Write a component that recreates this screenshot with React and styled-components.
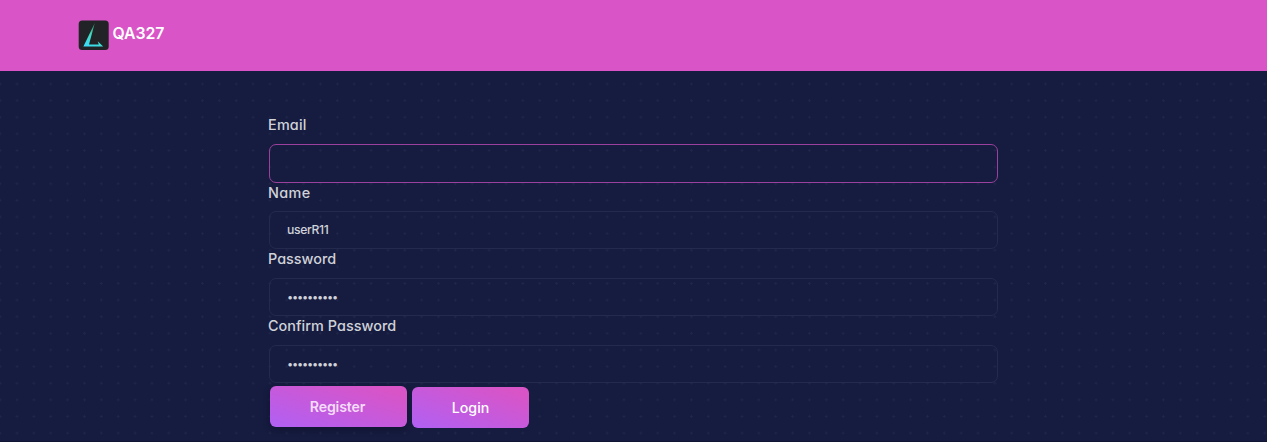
import React from "react";
import styled, { createGlobalStyle } from "styled-components";

const Global = createGlobalStyle`
  * { box-sizing: border-box; }
  body {
    margin: 0;
    background: #161c3f;
    color: #d0d2d9;
    font-family: Inter, "Open Sans", sans-serif;
    font-feature-settings: "cv11";
  }
`;

const Page = styled.div`
  height: 442px;
  overflow: hidden;
  border-bottom: 1px solid #111534;
  background-color: #161c3f;
  background-image: radial-gradient(circle at 8.4px 8.3px, #202649 0.9px, transparent 1.4px);
  background-size: 16.87px 16.64px;
  background-position: -8.2px 75.7px;
`;

const Navbar = styled.header`
  display: flex;
  align-items: flex-start;
  gap: 3.5px;
  height: 71px;
  padding: 20px 78px;
  background: #d954c6;
`;

const Brand = styled.span`
  margin-top: 3px;
  color: #fff;
  font-size: 15.8px;
  font-weight: 600;
  line-height: 21px;
  letter-spacing: -0.05px;
`;

const Form = styled.form`
  width: 730px;
  margin: 44px 0 0 268px;
`;

const Field = styled.div`
  display: flex;
  flex-direction: column;
  height: ${(p) => p.$height}px;
`;

const Label = styled.label`
  height: ${(p) => p.$height}px;
  font-size: 14.4px;
  font-weight: 450;
  line-height: 20px;
  letter-spacing: ${(p) => p.$spacing}px;
`;

const Input = styled.input`
  width: 729px;
  margin-left: 1px;
  height: ${(p) => (p.$active ? 39 : 38)}px;
  padding: ${(p) => (p.type === "password" ? "0 17px" : "0 17px 2px")};
  border: 1px solid ${(p) => (p.$active ? "#9b409d" : "#232a4d")};
  border-radius: 7px;
  outline: none;
  background: transparent;
  color: #d0d2d9;
  font: ${(p) => (p.type === "password" ? "11px" : "450 12.2px")} Inter, sans-serif;
  font-feature-settings: "cv11";
  letter-spacing: ${(p) => (p.type === "password" ? -1.2 : -0.35)}px;
`;

const Actions = styled.div`
  display: flex;
  align-items: flex-start;
  gap: 5.5px;
  margin: 2px 0 0 1.5px;
`;

const Button = styled.button`
  width: ${(p) => p.$width}px;
  height: 41px;
  margin-top: ${(p) => (p.$raised ? 0 : 1)}px;
  padding: ${(p) => (p.$raised ? "0 1px 1px 0" : "0 0 1px")};
  border: 0;
  border-radius: 6px;
  background: linear-gradient(to top right, #b060f4, #d954c6 90%);
  box-shadow: ${(p) => (p.$raised ? "0 3px 6px rgba(8, 10, 35, 0.4)" : "none")};
  color: ${(p) => (p.$raised ? "#f4dcf8" : "#fff")};
  font: ${(p) => (p.$raised ? 600 : 500)} 14.2px Inter, sans-serif;
  font-feature-settings: "cv11";
  letter-spacing: ${(p) => (p.$raised ? -0.15 : 0)}px;
`;

function Logo() {
  return (
    <svg width="31" height="30" viewBox="0 0 31 30">
      <defs>
        <linearGradient id="mark" x1="0.2" y1="1" x2="0.6" y2="0">
          <stop offset="0" stopColor="#3cdcf8" />
          <stop offset="0.5" stopColor="#42dcc0" />
          <stop offset="1" stopColor="#2f8458" />
        </linearGradient>
      </defs>
      <rect x="0.7" y="0.5" width="30" height="29.5" rx="3.5" fill="#222326" />
      <path d="M16.8 3 L5.4 26.4 H25.2 L19.7 21.2 L20.8 24.4 H11 Z" fill="url(#mark)" />
    </svg>
  );
}

const fields = [
  { id: "email", label: "Email", type: "text", value: "", height: 68, labelHeight: 29, spacing: 0.2, active: true },
  { id: "name", label: "Name", type: "text", value: "userR11", height: 66, labelHeight: 28, spacing: 0.4 },
  { id: "password", label: "Password", type: "password", value: "secret1234", height: 67, labelHeight: 29, spacing: 0.02 },
  { id: "confirm", label: "Confirm Password", type: "password", value: "secret1234", height: 68, labelHeight: 29, spacing: 0.05 },
];

export default function App() {
  return (
    <Page>
      <Global />
      <Navbar>
        <Logo />
        <Brand>QA327</Brand>
      </Navbar>
      <Form>
        {fields.map((f) => (
          <Field key={f.id} $height={f.height}>
            <Label htmlFor={f.id} $height={f.labelHeight} $spacing={f.spacing}>{f.label}</Label>
            <Input id={f.id} type={f.type} defaultValue={f.value} $active={f.active} />
          </Field>
        ))}
        <Actions>
          <Button type="button" $width={137} $raised>Register</Button>
          <Button type="button" $width={117}>Login</Button>
        </Actions>
      </Form>
    </Page>
  );
}
